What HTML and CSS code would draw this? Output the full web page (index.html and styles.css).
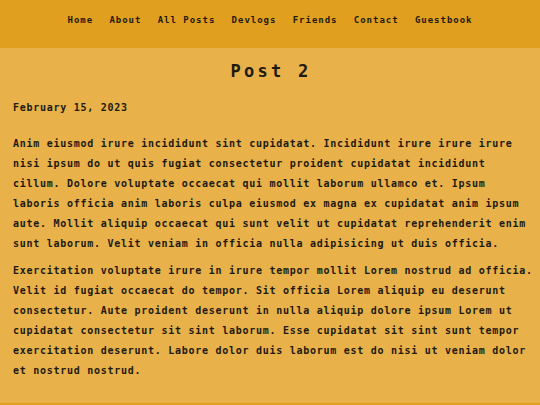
FILE: index.html
```html
<!DOCTYPE html>
<html lang="en">
<head>
<meta charset="utf-8">
<title>Post 2</title>
<link rel="stylesheet" href="styles.css">
</head>
<body>
<header class="site-header">
  <nav class="nav">
    <a href="#">Home</a>
    <a href="#">About</a>
    <a href="#">All Posts</a>
    <a href="#">Devlogs</a>
    <a href="#">Friends</a>
    <a href="#">Contact</a>
    <a href="#">Guestbook</a>
  </nav>
</header>
<main class="post">
  <h1 class="post-title">Post 2</h1>
  <p class="post-date">February 15, 2023</p>
  <p class="post-body">Anim eiusmod irure incididunt sint cupidatat. Incididunt irure irure irure nisi ipsum do ut quis fugiat consectetur proident cupidatat incididunt cillum. Dolore voluptate occaecat qui mollit laborum ullamco et. Ipsum laboris officia anim laboris culpa eiusmod ex magna ex cupidatat anim ipsum aute. Mollit aliquip occaecat qui sunt velit ut cupidatat reprehenderit enim sunt laborum. Velit veniam in officia nulla adipisicing ut duis officia.</p>
  <p class="post-body">Exercitation voluptate irure in irure tempor mollit Lorem nostrud ad officia. Velit id fugiat occaecat do tempor. Sit officia Lorem aliquip eu deserunt consectetur. Aute proident deserunt in nulla aliquip dolore ipsum Lorem ut cupidatat consectetur sit sint laborum. Esse cupidatat sit sint sunt tempor exercitation deserunt. Labore dolor duis laborum est do nisi ut veniam dolor et nostrud nostrud.</p>
</main>
<footer class="site-footer"></footer>
</body>
</html>
```

FILE: styles.css
```css
html, body {
  margin: 0;
  padding: 0;
}
body {
  background: #e8b14a;
  color: #1e1a10;
  font-family: "DejaVu Sans Mono", monospace;
  font-weight: bold;
}
.site-header {
  background: #e09f1f;
  height: 48px;
  box-sizing: border-box;
  padding-top: 14px;
}
.nav {
  display: flex;
  justify-content: center;
  gap: 16.3px;
  font-size: 9px;
  line-height: 13px;
  letter-spacing: 0.98px;
}
.nav a {
  color: #1e1a10;
  text-decoration: none;
}
.post {
  padding: 8px 6px 0 13px;
  min-height: 355px;
  box-sizing: border-box;
}
.post-title {
  margin: 0 5px 0 0;
  text-align: center;
  font-size: 17px;
  line-height: 30px;
  letter-spacing: 3.26px;
}
.post-date {
  margin: 12px 0 16px;
  font-size: 10px;
  line-height: 20px;
  letter-spacing: 0.73px;
}
.post-body {
  margin: 0 0 7px;
  font-size: 10px;
  line-height: 20px;
  letter-spacing: 0.73px;
}
.site-footer {
  background: #e09f1f;
  height: 20px;
}
```
